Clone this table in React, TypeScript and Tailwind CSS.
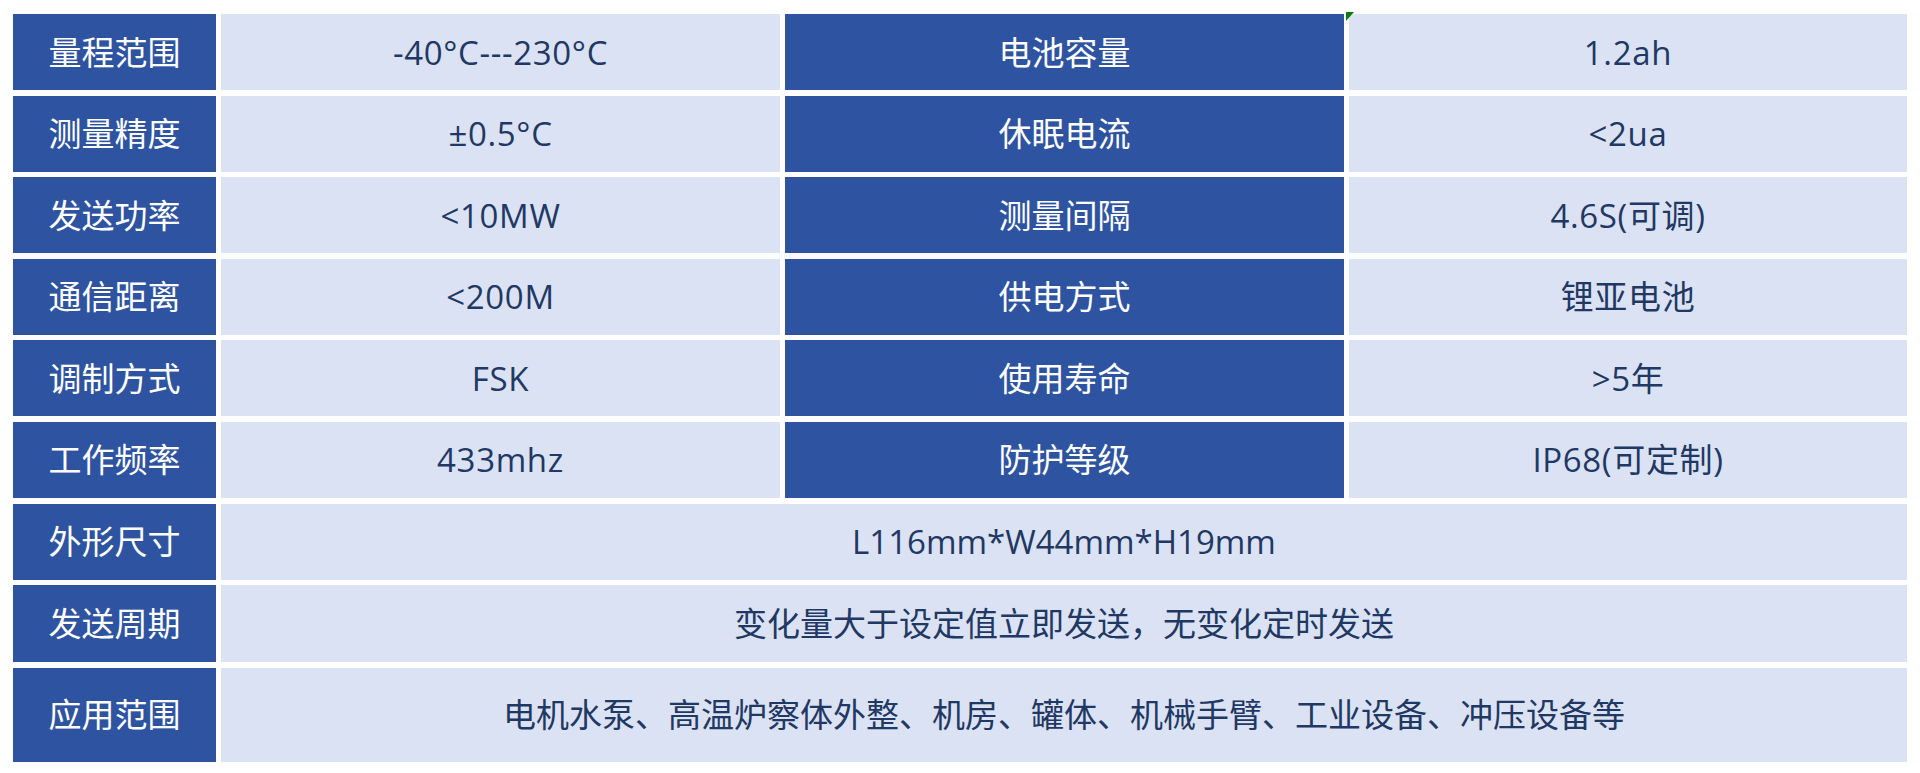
import React from 'react'

// 参数表：两列对照 + 三行通栏
const pairs: [string, string, string, string][] = [
  ['量程范围', '-40°C---230°C', '电池容量', '1.2ah'],
  ['测量精度', '±0.5°C', '休眠电流', '<2ua'],
  ['发送功率', '<10MW', '测量间隔', '4.6S(可调)'],
  ['通信距离', '<200M', '供电方式', '锂亚电池'],
  ['调制方式', 'FSK', '使用寿命', '>5年'],
  ['工作频率', '433mhz', '防护等级', 'IP68(可定制)'],
]

const wide: [string, string][] = [
  ['外形尺寸', 'L116mm*W44mm*H19mm'],
  ['发送周期', '变化量大于设定值立即发送，无变化定时发送'],
  ['应用范围', '电机水泵、高温炉察体外整、机房、罐体、机械手臂、工业设备、冲压设备等'],
]

const head = 'flex items-center justify-center bg-[#2e54a1] text-white'
const cell = 'flex items-center justify-center bg-[#dae2f3] text-[#1f3864]'

export default function App() {
  return (
    <div
      className="w-[1920px] h-[773px] bg-white pt-[14px] pl-[13px]"
      style={{ fontFamily: '"Open Sans", "Noto Sans CJK SC", sans-serif' }}
    >
      <div className="grid grid-cols-[203px_559px_559px_558px] gap-x-[5px] gap-y-[5.6px] grid-rows-[76px_76px_76px_76px_76px_76px_76px_77px_94px] text-[33px] leading-none w-fit">
        {pairs.map((r, i) => (
          <React.Fragment key={i}>
            <div className={head}>{r[0]}</div>
            <div className={`${cell} tracking-[0.02em]`}>{r[1]}</div>
            <div className={head}>{r[2]}</div>
            <div className={`${cell} relative tracking-[0.02em]`}>
              {i === 0 && (
                <span className="absolute -left-[3px] -top-[2px] w-0 h-0 border-t-[9px] border-t-[#0a7a0a] border-r-[8px] border-r-transparent" />
              )}
              {r[3]}
            </div>
          </React.Fragment>
        ))}
        {wide.map((r, i) => (
          <React.Fragment key={'w' + i}>
            <div className={head}>{r[0]}</div>
            <div className={`${cell} col-span-3`}>{r[1]}</div>
          </React.Fragment>
        ))}
      </div>
    </div>
  )
}
